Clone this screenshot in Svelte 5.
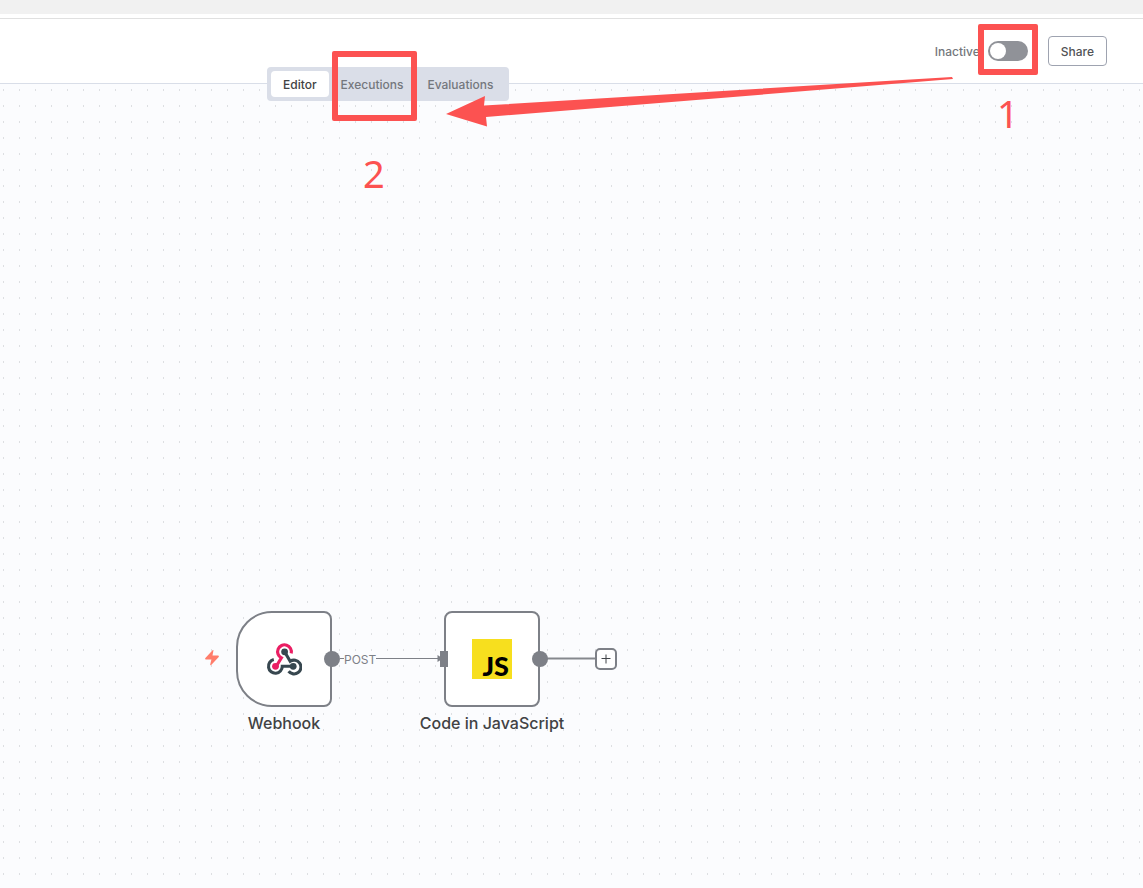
<script>
  let view = $state('Editor');
  let active = $state(false);
  const views = ['Editor', 'Executions', 'Evaluations'];
</script>

<div class="page">
  <div class="strip"></div>
  <header>
    <nav class="tabs" aria-label="Workflow views">
      {#each views as name}
        <button type="button" class:current={view === name} onclick={() => (view = name)}>{name}</button>
      {/each}
    </nav>
    <div class="actions">
      <label class="toggle">
        <span>Inactive</span>
        <input type="checkbox" role="switch" bind:checked={active} />
      </label>
      <button type="button" class="share">Share</button>
    </div>
  </header>

  <main class="canvas">
    <svg class="bolt" viewBox="0 0 14 16" width="14" height="16" aria-hidden="true">
      <path d="M7.600 .3C8.100-.1 8.600.2 8.400.8L7.500 5.400H13C13.900 5.400 14.100 6.400 13.700 6.900L6.200 15C5.600 15.500 5 15.100 5.200 14.500L6.400 9.500H.9C.1 9.500-.1 8.600.4 8Z" fill="#ff7d6b" />
    </svg>

    <svg class="wires" width="380" height="40" aria-hidden="true">
      <path d="M104 18.500H204" stroke="#7d8087" />
      <path d="M201.500 15L207 18.500L201.500 22Z" fill="#7d8087" />
      <path d="M310 18.500H360" stroke="#85888d" stroke-width="2" />
    </svg>

    <div class="node webhook">
      <svg viewBox="0 0 36 34" width="36" height="34" aria-hidden="true">
        <g fill="none" stroke-width="3.100">
          <path d="M25.200 11.400A6.900 6.900 0 1 0 15.400 15.900L10.400 24" stroke="#ea1e63" />
          <path d="M18.600 9.800L24.200 19.300A6.900 6.900 0 1 1 22.600 29.300" stroke="#37474f" />
          <path d="M7.800 17.600A6.900 6.900 0 1 0 16.300 24.300H27" stroke="#37474f" />
        </g>
        <circle cx="18.600" cy="9.800" r="3.400" fill="#37474f" />
        <circle cx="9.500" cy="24.300" r="3.400" fill="#ea1e63" />
        <circle cx="27.200" cy="24.300" r="3.400" fill="#37474f" />
      </svg>
      <span class="out"></span>
      <span class="title">Webhook</span>
    </div>
    <span class="method">POST</span>

    <div class="node code">
      <span class="js">JS</span>
      <span class="in"></span>
      <span class="out"></span>
      <span class="title">Code in JavaScript</span>
    </div>

    <button type="button" class="add" aria-label="Add node">
      <svg width="10" height="10" viewBox="0 0 10 10" aria-hidden="true"><path d="M5 .5V9.500M.5 4.500H9.500" stroke="#414448" /></svg>
    </button>
  </main>

  <div class="marks">
    <div class="frame first"></div>
    <div class="frame second"></div>
    <svg width="510" height="60" aria-hidden="true">
      <path d="M0 44L39 26L38 35.500L506 7L507 9L40 47L41 56.500Z" fill="#fc5251" />
    </svg>
    <span class="step one">1</span>
    <span class="step two">2</span>
  </div>
</div>

<style>
  :global(body) { margin: 0; }
  .page {
    position: relative;
    display: flex;
    flex-direction: column;
    min-height: 100vh;
    overflow: hidden;
    background: #fff;
    color: #414244;
    font-family: Inter, sans-serif;
  }
  button { font: inherit; cursor: pointer; }
  .strip { height: 14px; background: #f1f1f1; }
  header {
    position: relative;
    display: flex;
    justify-content: flex-end;
    align-items: center;
    height: 64px;
    margin-top: 4px;
    padding-right: 36px;
    border-top: 1px solid #e0e0e0;
    border-bottom: 1px solid #d9dee8;
    font-size: 12px;
    font-weight: 500;
    line-height: 16px;
  }
  .tabs {
    position: absolute;
    z-index: 1;
    left: 267px;
    bottom: -18px;
    display: flex;
    padding: 4px;
    border-radius: 4px;
    background: #dadee8;
  }
  .tabs button {
    height: 26px;
    padding: 2px 12px 0;
    border: 0;
    border-radius: 4px;
    background: none;
    color: #74777d;
  }
  .tabs .current { background: #fff; color: #414244; }
  .actions { display: flex; align-items: center; gap: 20px; }
  .toggle { display: flex; align-items: center; gap: 8px; color: #74777d; }
  .toggle span { padding-top: 2px; }
  .toggle input {
    appearance: none;
    width: 40px;
    height: 20px;
    margin: 0;
    padding: 2px;
    border-radius: 10px;
    background: #909298;
  }
  .toggle input::before {
    content: '';
    display: block;
    width: 16px;
    height: 16px;
    border-radius: 50%;
    background: #fff;
  }
  .toggle input:checked { background: #35a36b; }
  .toggle input:checked::before { margin-left: 20px; }
  .share {
    height: 30px;
    padding: 2px 12px 0;
    border: 1px solid #9ea3b0;
    border-radius: 4px;
    background: #fff;
    color: #525356;
  }
  .canvas {
    position: relative;
    flex: 1;
    background-color: #fbfcfe;
    background-image: linear-gradient(#fbfcfe 14px, transparent 14px), linear-gradient(90deg, #dddfe2 1px, transparent 1px);
    background-size: 16px 16px;
    background-position: 3px 7px;
  }
  .bolt { position: absolute; left: 205px; top: 566px; }
  .wires { position: absolute; left: 236px; top: 556px; }
  .node {
    position: absolute;
    top: 527px;
    display: grid;
    place-items: center;
    box-sizing: border-box;
    width: 96px;
    height: 96px;
    border: 2px solid #7d8087;
    border-radius: 8px;
    background: #fff;
  }
  .webhook { left: 236px; border-radius: 36px 8px 8px 36px; }
  .code { left: 444px; }
  .out {
    position: absolute;
    right: -10px;
    top: 38px;
    width: 16px;
    height: 16px;
    border-radius: 50%;
    background: #7d8087;
  }
  .in {
    position: absolute;
    left: -6px;
    top: 38px;
    width: 8px;
    height: 16px;
    background: #7d8087;
  }
  .title {
    position: absolute;
    top: 100px;
    left: 50%;
    transform: translateX(-50%);
    font-size: 16px;
    font-weight: 500;
    line-height: 20px;
    white-space: nowrap;
  }
  .method {
    position: absolute;
    left: 344px;
    top: 568px;
    background: #fbfcfe;
    color: #7d8087;
    font-size: 12px;
    line-height: 16px;
  }
  .js {
    display: flex;
    align-items: flex-end;
    justify-content: flex-end;
    box-sizing: border-box;
    width: 40px;
    height: 40px;
    padding-right: 3px;
    background: #f7df1e;
    color: #000;
    font: 900 27px/26px Lato, sans-serif;
  }
  .add {
    position: absolute;
    left: 595px;
    top: 564px;
    display: grid;
    place-items: center;
    width: 22px;
    height: 22px;
    padding: 0;
    border: 2px solid #7d8087;
    border-radius: 5px;
    background: #fff;
  }
  .marks { position: absolute; inset: 0; z-index: 2; pointer-events: none; color: #fc5251; }
  .frame { position: absolute; box-sizing: border-box; border: 6px solid #fc5251; border-radius: 2px; }
  .first { right: 105px; top: 24px; width: 60px; height: 51px; }
  .second { left: 332px; top: 51px; width: 85px; height: 70px; }
  .marks svg { position: absolute; left: 446px; top: 70px; }
  .step { position: absolute; font: 400 38px/40px "Noto Sans", sans-serif; }
  .one { left: 997px; top: 93px; }
  .two { left: 363px; top: 153px; }
</style>
